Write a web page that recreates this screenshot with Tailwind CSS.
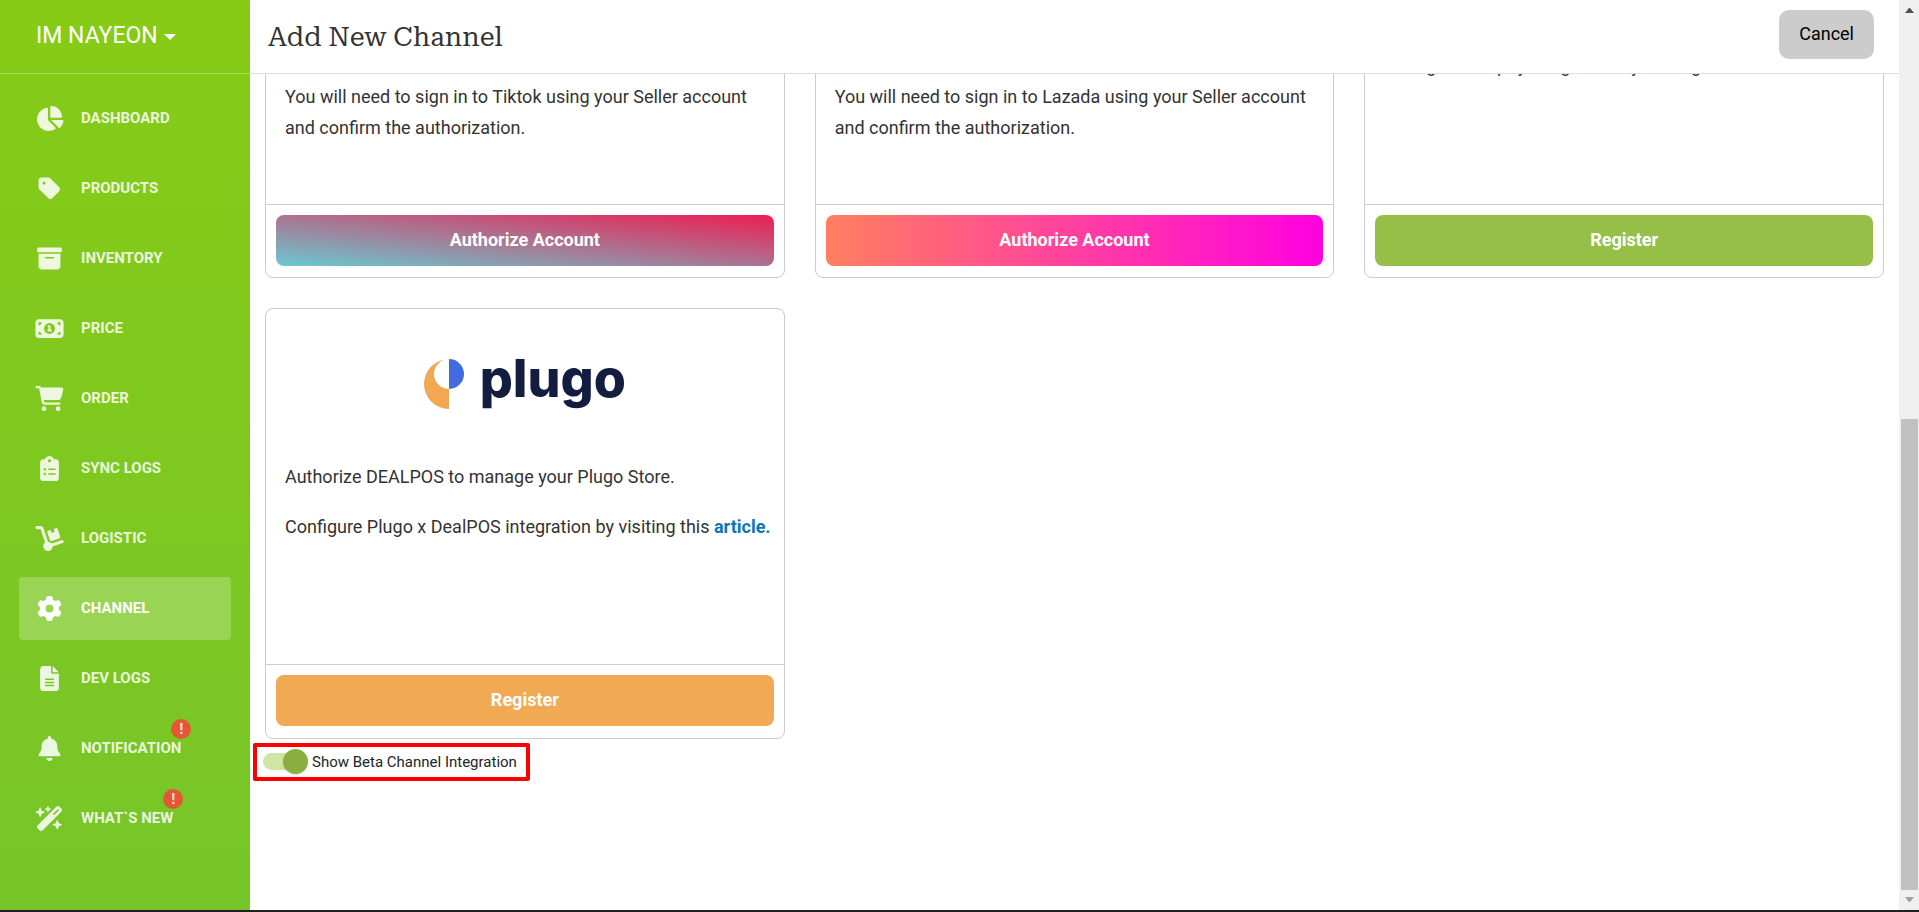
<!DOCTYPE html>
<html lang="en">
<head>
  <meta charset="UTF-8" />
  <meta name="viewport" content="width=device-width, initial-scale=1" />
  <title>Add New Channel</title>
  <script src="https://cdn.jsdelivr.net/npm/@tailwindcss/browser@4"></script>
</head>
<body class="h-screen overflow-hidden flex flex-col bg-white text-[#333] font-[Roboto,sans-serif]">

  <div class="flex flex-1 min-h-0">

    <!-- SIDEBAR -->
    <aside class="w-[250px] shrink-0 bg-[linear-gradient(to_bottom,#87cb16,#76c529)] text-white">
      <div class="h-[74px] border-b border-white/30 pl-9 flex items-center">
        <button class="flex items-center gap-[6px] text-[23px]">IM NAYEON
          <svg class="w-3 h-[6px]" viewBox="0 0 12 6" fill="currentColor"><path d="M0 0h12L6 6z"/></svg>
        </button>
      </div>

      <nav class="px-[19px] pt-[13px] flex flex-col gap-[7px] text-[15px] font-bold leading-5">
        <a href="#" class="flex items-center gap-4 h-[63px] pl-[15px] pb-px rounded text-white/86">
          <svg class="w-[31px] h-[25px]" viewBox="0 0 576 512" fill="currentColor"><path d="M304 240V16.6c0-9 7-16.6 16-16.6C443.7 0 544 100.3 544 224c0 9-7.6 16-16.6 16H304zM32 272C32 150.7 122.1 50.3 239 34.3c9.2-1.3 17 6.1 17 15.4V288L412.5 444.5c6.7 6.7 6.2 17.7-1.5 23.1C371.8 495.6 323.8 512 272 512C139.5 512 32 404.6 32 272zm526.4 16c9.3 0 16.6 7.8 15.4 17c-7.7 55.9-34.6 105.6-73.9 142.3c-6 5.6-15.4 5.2-21.2-.7L320 288H558.4z"/></svg>
          <span>DASHBOARD</span>
        </a>
        <a href="#" class="flex items-center gap-4 h-[63px] pl-[15px] pb-px rounded text-white/86">
          <svg class="w-[31px] h-[25px]" viewBox="0 0 448 512" fill="currentColor"><path d="M0 80V229.5c0 17 6.7 33.3 18.7 45.3l176 176c25 25 65.5 25 90.5 0L418.7 317.3c25-25 25-65.5 0-90.5l-176-176c-12-12-28.3-18.7-45.3-18.7H48C21.5 32 0 53.5 0 80zm112 32a32 32 0 1 1 0 64 32 32 0 1 1 0-64z"/></svg>
          <span>PRODUCTS</span>
        </a>
        <a href="#" class="flex items-center gap-4 h-[63px] pl-[15px] pb-px rounded text-white/86">
          <svg class="w-[31px] h-[25px]" viewBox="0 0 512 512" fill="currentColor"><path d="M32 32H480c17.7 0 32 14.3 32 32V96c0 17.7-14.3 32-32 32H32C14.3 128 0 113.7 0 96V64C0 46.3 14.3 32 32 32zm0 128H480V416c0 35.3-28.7 64-64 64H96c-35.3 0-64-28.7-64-64V160zm128 80c0 8.8 7.2 16 16 16H336c8.8 0 16-7.2 16-16s-7.2-16-16-16H176c-8.8 0-16 7.2-16 16z"/></svg>
          <span>INVENTORY</span>
        </a>
        <a href="#" class="flex items-center gap-4 h-[63px] pl-[15px] pb-px rounded text-white/86">
          <svg class="w-[31px] h-[25px]" viewBox="0 0 576 512" fill="currentColor"><path d="M64 64C28.7 64 0 92.7 0 128V384c0 35.3 28.7 64 64 64H512c35.3 0 64-28.7 64-64V128c0-35.3-28.7-64-64-64H64zm64 320H64V320c35.3 0 64 28.7 64 64zM64 192V128h64c0 35.3-28.7 64-64 64zM448 384c0-35.3 28.7-64 64-64v64H448zm64-192c-35.3 0-64-28.7-64-64h64v64zM176 256a112 112 0 1 1 224 0 112 112 0 1 1 -224 0zm76-48c0 9.7 6.9 17.7 16 19.6V276h-4c-11 0-20 9-20 20s9 20 20 20h24 24c11 0 20-9 20-20s-9-20-20-20h-4V208c0-11-9-20-20-20H272c-11 0-20 9-20 20z"/></svg>
          <span>PRICE</span>
        </a>
        <a href="#" class="flex items-center gap-4 h-[63px] pl-[15px] pb-px rounded text-white/86">
          <svg class="w-[31px] h-[25px]" viewBox="0 0 576 512" fill="currentColor"><path d="M0 24C0 10.7 10.7 0 24 0H69.5c22 0 41.5 12.8 50.6 32h411c26.3 0 45.5 25 38.6 50.4l-41 152.3c-8.5 31.4-37 53.3-69.5 53.3H170.7l5.4 28.5c2.2 11.3 12.1 19.5 23.6 19.5H488c13.3 0 24 10.7 24 24s-10.7 24-24 24H199.7c-34.6 0-64.3-24.6-70.7-58.5L77.4 54.5c-.7-3.8-4-6.5-7.9-6.5H24C10.7 48 0 37.3 0 24zM128 464a48 48 0 1 1 96 0 48 48 0 1 1 -96 0zm336-48a48 48 0 1 1 0 96 48 48 0 1 1 0-96z"/></svg>
          <span>ORDER</span>
        </a>
        <a href="#" class="flex items-center gap-4 h-[63px] pl-[15px] pb-px rounded text-white/86">
          <svg class="w-[31px] h-[25px]" viewBox="0 0 384 512" fill="currentColor"><path d="M192 0c-41.8 0-77.4 26.7-90.5 64H64C28.7 64 0 92.7 0 128V448c0 35.3 28.7 64 64 64H320c35.3 0 64-28.7 64-64V128c0-35.3-28.7-64-64-64H282.5C269.4 26.7 233.8 0 192 0zm0 64a32 32 0 1 1 0 64 32 32 0 1 1 0-64zM72 272a24 24 0 1 1 48 0 24 24 0 1 1 -48 0zm104-16H304c8.8 0 16 7.2 16 16s-7.2 16-16 16H176c-8.8 0-16-7.2-16-16s7.2-16 16-16zM72 368a24 24 0 1 1 48 0 24 24 0 1 1 -48 0zm88 0c0-8.8 7.2-16 16-16H304c8.8 0 16 7.2 16 16s-7.2 16-16 16H176c-8.8 0-16-7.2-16-16z"/></svg>
          <span>SYNC LOGS</span>
        </a>
        <a href="#" class="flex items-center gap-4 h-[63px] pl-[15px] pb-px rounded text-white/86">
          <svg class="w-[31px] h-[25px]" viewBox="0 0 576 512" fill="currentColor"><path d="M0 32C0 14.3 14.3 0 32 0h72.9c27.5 0 52 17.6 60.7 43.8L257.7 320c30.1 .5 56.8 14.9 74 37l202.1-67.4c16.8-5.6 34.9 3.5 40.5 20.2s-3.5 34.9-20.2 40.5L352 417.7c-.9 52.2-43.5 94.3-96 94.3c-53 0-96-43-96-96c0-30.8 14.5-58.2 37-75.8L104.9 64H32C14.3 64 0 49.7 0 32zM244.8 134.5c-5.5-16.8 3.7-34.9 20.5-40.3L311 79.4l19.8 60.9 60.9-19.8L371.8 59.6l45.7-14.8c16.8-5.5 34.9 3.7 40.3 20.5l49.4 152.2c5.5 16.8-3.7 34.9-20.5 40.3L334.5 307.2c-16.8 5.5-34.9-3.7-40.3-20.5L244.8 134.5z"/></svg>
          <span>LOGISTIC</span>
        </a>
        <a href="#" class="flex items-center gap-4 h-[63px] pl-[15px] pb-px rounded bg-white/23 text-white">
          <svg class="w-[31px] h-[25px]" viewBox="0 0 512 512" fill="currentColor"><path d="M495.9 166.6c3.2 8.7 .5 18.4-6.4 24.6l-43.3 39.4c1.1 8.3 1.7 16.8 1.7 25.4s-.6 17.1-1.7 25.4l43.3 39.4c6.9 6.2 9.6 15.9 6.4 24.6c-4.4 11.9-9.7 23.3-15.8 34.3l-4.7 8.1c-6.6 11-14 21.4-22.1 31.2c-5.9 7.2-15.7 9.6-24.5 6.8l-55.7-17.7c-13.4 10.3-28.2 18.9-44 25.4l-12.5 57.1c-2 9.1-9 16.3-18.2 17.8c-13.8 2.3-28 3.5-42.5 3.5s-28.7-1.2-42.5-3.5c-9.2-1.5-16.2-8.7-18.2-17.8l-12.5-57.1c-15.8-6.5-30.6-15.1-44-25.4L83.1 425.9c-8.8 2.8-18.6 .3-24.5-6.8c-8.1-9.8-15.5-20.2-22.1-31.2l-4.7-8.1c-6.1-11-11.4-22.4-15.8-34.3c-3.2-8.7-.5-18.4 6.4-24.6l43.3-39.4C64.6 273.1 64 264.6 64 256s.6-17.1 1.7-25.4L22.4 191.2c-6.9-6.2-9.6-15.9-6.4-24.6c4.4-11.9 9.7-23.3 15.8-34.3l4.7-8.1c6.6-11 14-21.4 22.1-31.2c5.9-7.2 15.7-9.6 24.5-6.8l55.7 17.7c13.4-10.3 28.2-18.9 44-25.4l12.5-57.1c2-9.1 9-16.3 18.2-17.8C227.3 1.2 241.5 0 256 0s28.7 1.2 42.5 3.5c9.2 1.5 16.2 8.7 18.2 17.8l12.5 57.1c15.8 6.5 30.6 15.1 44 25.4l55.7-17.7c8.8-2.8 18.6-.3 24.5 6.8c8.1 9.8 15.5 20.2 22.1 31.2l4.7 8.1c6.1 11 11.4 22.4 15.8 34.3zM256 336a80 80 0 1 0 0-160 80 80 0 1 0 0 160z"/></svg>
          <span>CHANNEL</span>
        </a>
        <a href="#" class="flex items-center gap-4 h-[63px] pl-[15px] pb-px rounded text-white/86">
          <svg class="w-[31px] h-[25px]" viewBox="0 0 384 512" fill="currentColor"><path d="M64 0C28.7 0 0 28.7 0 64V448c0 35.3 28.7 64 64 64H320c35.3 0 64-28.7 64-64V160H256c-17.7 0-32-14.3-32-32V0H64zM256 0V128H384L256 0zM112 256H272c8.8 0 16 7.2 16 16s-7.2 16-16 16H112c-8.8 0-16-7.2-16-16s7.2-16 16-16zm0 64H272c8.8 0 16 7.2 16 16s-7.2 16-16 16H112c-8.8 0-16-7.2-16-16s7.2-16 16-16zm0 64H272c8.8 0 16 7.2 16 16s-7.2 16-16 16H112c-8.8 0-16-7.2-16-16s7.2-16 16-16z"/></svg>
          <span>DEV LOGS</span>
        </a>
        <a href="#" class="flex items-center gap-4 h-[63px] pl-[15px] pb-px rounded text-white/86">
          <svg class="w-[31px] h-[25px]" viewBox="0 0 448 512" fill="currentColor"><path d="M224 0c-17.7 0-32 14.3-32 32V51.2C119 66 64 130.6 64 208v18.8c0 47-17.3 92.4-48.5 127.6l-7.4 8.3c-8.4 9.4-10.4 22.9-5.3 34.4S19.4 416 32 416H416c12.6 0 24-7.4 29.2-18.9s3.1-25-5.3-34.4l-7.4-8.3C401.3 319.2 384 273.9 384 226.8V208c0-77.4-55-142-128-156.8V32c0-17.7-14.3-32-32-32zm45.3 493.3c12-12 18.7-28.3 18.7-45.3H224 160c0 17 6.7 33.3 18.7 45.3s28.3 18.7 45.3 18.7s33.3-6.7 45.3-18.7z"/></svg>
          <span class="relative">NOTIFICATION
            <span class="absolute left-full -top-[19px] -ml-[10px] size-5 rounded-full bg-[#e55635] text-center">!</span>
          </span>
        </a>
        <a href="#" class="flex items-center gap-4 h-[63px] pl-[15px] pb-px rounded text-white/86">
          <svg class="w-[31px] h-[25px]" viewBox="0 0 576 512" fill="currentColor"><path d="M234.7 42.7L197 56.8c-3 1.1-5 4-5 7.2s2 6.1 5 7.2l37.7 14.1L248.8 123c1.1 3 4 5 7.2 5s6.1-2 7.2-5l14.1-37.7L315 71.2c3-1.1 5-4 5-7.2s-2-6.1-5-7.2L277.3 42.7 263.2 5c-1.1-3-4-5-7.2-5s-6.1 2-7.2 5L234.7 42.7zM46.1 395.4c-18.7 18.7-18.7 49.1 0 67.9l34.6 34.6c18.7 18.7 49.1 18.7 67.9 0L529.9 116.5c18.7-18.7 18.7-49.1 0-67.9L495.3 14.1c-18.7-18.7-49.1-18.7-67.9 0L46.1 395.4zM484.6 82.6l-105 105-23.3-23.3 105-105 23.3 23.3zM7.5 117.2C3 118.9 0 123.2 0 128s3 9.1 7.5 10.8L64 160l21.2 56.5c1.7 4.5 6 7.5 10.8 7.5s9.1-3 10.8-7.5L128 160l56.5-21.2c4.5-1.7 7.5-6 7.5-10.8s-3-9.1-7.5-10.8L128 96 106.8 39.5C105.1 35 100.8 32 96 32s-9.1 3-10.8 7.5L64 96 7.5 117.2zm352 256c-4.5 1.7-7.5 6-7.5 10.8s3 9.1 7.5 10.8L416 416l21.2 56.5c1.7 4.5 6 7.5 10.8 7.5s9.1-3 10.8-7.5L480 416l56.5-21.2c4.5-1.7 7.5-6 7.5-10.8s-3-9.1-7.5-10.8L480 352l-21.2-56.5c-1.7-4.5-6-7.5-10.8-7.5s-9.1 3-10.8 7.5L416 352l-56.5 21.2z"/></svg>
          <span class="relative">WHAT`S NEW
            <span class="absolute left-full -top-[19px] -ml-[10px] size-5 rounded-full bg-[#e55635] text-center">!</span>
          </span>
        </a>
      </nav>
    </aside>

    <div class="flex-1 min-w-0 flex flex-col">
      <header class="h-[74px] shrink-0 border-b border-[#ddd] pl-[18px] pr-[25px] pt-[10px] flex items-start justify-between">
        <h1 class="text-[27px] leading-[54px] font-['Roboto_Slab','Roboto_Serif','Noto_Serif','DejaVu_Serif',serif]">Add New Channel</h1>
        <button class="h-[49px] px-5 pb-[2px] rounded-[10px] bg-[#ccc] text-black text-lg">Cancel</button>
      </header>

      <!-- CHANNEL LIST, scrolled to its end -->
      <main class="flex-1 min-h-0 overflow-hidden">
        <div class="-mt-[227px]">
          <div class="grid grid-cols-3 gap-[30px] px-[15px] text-lg leading-[31px]">

            <section class="h-[431px] flex flex-col border border-[#ccc] rounded-lg">
              <div class="flex-1 pl-[19px] pr-3 pt-[233px]">
                <p>You will need to sign in to Tiktok using your Seller account and confirm the authorization.</p>
              </div>
              <div class="border-t border-[#ccc] px-[10px] pt-[10px] pb-[11px]">
                <button class="w-full h-[51px] pb-[2px] rounded-lg text-white font-bold bg-[linear-gradient(to_top_right,#69c9d0,#ee1d52)]">Authorize Account</button>
              </div>
            </section>

            <section class="h-[431px] flex flex-col border border-[#ccc] rounded-lg">
              <div class="flex-1 pl-[19px] pr-3 pt-[233px]">
                <p>You will need to sign in to Lazada using your Seller account and confirm the authorization.</p>
              </div>
              <div class="border-t border-[#ccc] px-[10px] pt-[10px] pb-[11px]">
                <button class="w-full h-[51px] pb-[2px] rounded-lg text-white font-bold bg-[linear-gradient(to_right,#ff7f5f,#ff00e1)]">Authorize Account</button>
              </div>
            </section>

            <section class="h-[431px] flex flex-col border border-[#ccc] rounded-lg">
              <div class="flex-1 pl-[19px] pr-3 pt-[202px]">
                <p>Configure Shopify integration by visiting this <a href="#" class="font-bold text-[#0b76b8]">article.</a></p>
              </div>
              <div class="border-t border-[#ccc] px-[10px] pt-[10px] pb-[11px]">
                <button class="w-full h-[51px] pb-[2px] rounded-lg text-white font-bold bg-[#96bf48]">Register</button>
              </div>
            </section>

            <section class="h-[431px] flex flex-col border border-[#ccc] rounded-lg">
              <div class="h-[152px] flex justify-center items-start gap-4 pt-[50px]">
                <svg class="w-10 h-[50px]" viewBox="0 0 40 50">
                  <path d="M25 0a25 25 0 0 0 0 50V30a15 15 0 0 1 0-30z" fill="#f2a852"/>
                  <path d="M25 0a15 15 0 0 1 0 30z" fill="#426be0"/>
                </svg>
                <span class="text-[52px] leading-10 font-extrabold text-[#121d3f] font-[Inter,sans-serif]">plugo</span>
              </div>
              <div class="flex-1 pl-[19px] pr-3 flex flex-col gap-[19px]">
                <p>Authorize DEALPOS to manage your Plugo Store.</p>
                <p>Configure Plugo x DealPOS integration by visiting this <a href="#" class="font-bold text-[#0b76b8]">article.</a></p>
              </div>
              <div class="border-t border-[#ccc] px-[10px] pt-[10px] pb-3">
                <button class="w-full h-[51px] pb-[2px] rounded-lg text-white font-bold bg-[#f2a954]">Register</button>
              </div>
            </section>
          </div>

          <label class="mt-1 ml-[3px] w-fit h-[38px] flex items-center gap-1 border-4 border-[#f00] rounded-xs pl-[6px] pr-[9px] text-[15px] text-[#212529]">
            <input type="checkbox" checked class="appearance-none relative w-[45px] h-[26px] before:absolute before:left-0 before:top-1 before:w-10 before:h-[17px] before:rounded-full before:bg-[#d0e6a5] after:absolute after:right-0 after:top-0 after:size-[25px] after:rounded-full after:bg-[#8aaf41] after:shadow-sm">
            Show Beta Channel Integration
          </label>
        </div>
      </main>
    </div>

    <!-- SCROLLBAR -->
    <div class="w-5 shrink-0 bg-[#f0f0f0] flex flex-col items-center pt-2 pb-2">
      <svg class="w-[9px] h-[5px]" viewBox="0 0 9 5" fill="#505050"><path d="M4 0h1l4 5H0z"/></svg>
      <div class="flex-1"></div>
      <div class="w-[17px] h-[471px] bg-[#c1c1c1]"></div>
      <svg class="w-[9px] h-[5px] mt-[7px]" viewBox="0 0 9 5" fill="#a0a0a0"><path d="M0 0h9L5 5H4z"/></svg>
    </div>
  </div>

  <div class="h-[2px] bg-[#231f20]"></div>

</body>
</html>
